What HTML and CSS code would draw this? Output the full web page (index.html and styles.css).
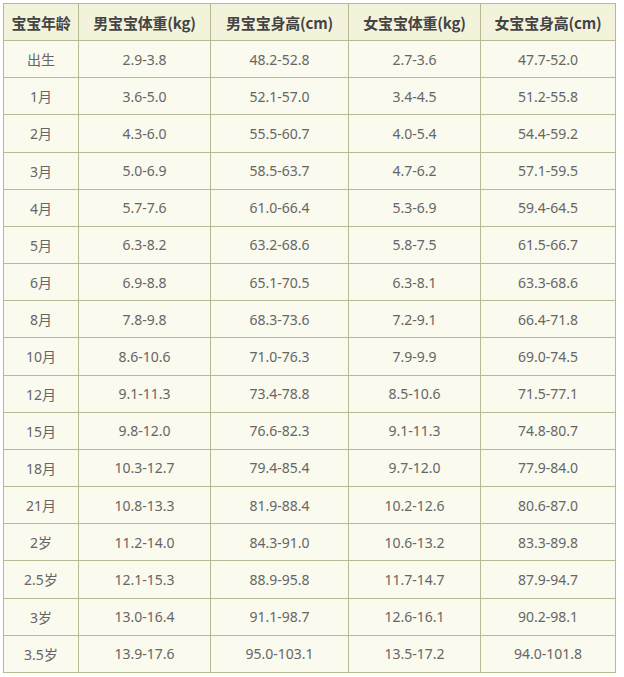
FILE: index.html
```html
<!DOCTYPE html>
<html lang="zh">
<head>
<meta charset="utf-8">
<link rel="stylesheet" href="styles.css">
</head>
<body>
<table class="chart">
<colgroup>
<col class="c1"><col class="c2"><col class="c3"><col class="c4"><col class="c5">
</colgroup>
<thead>
<tr><th>宝宝年龄</th><th>男宝宝体重(kg)</th><th>男宝宝身高(cm)</th><th>女宝宝体重(kg)</th><th>女宝宝身高(cm)</th></tr>
</thead>
<tbody>
<tr><td>出生</td><td>2.9-3.8</td><td>48.2-52.8</td><td>2.7-3.6</td><td>47.7-52.0</td></tr>
<tr><td>1月</td><td>3.6-5.0</td><td>52.1-57.0</td><td>3.4-4.5</td><td>51.2-55.8</td></tr>
<tr><td>2月</td><td>4.3-6.0</td><td>55.5-60.7</td><td>4.0-5.4</td><td>54.4-59.2</td></tr>
<tr><td>3月</td><td>5.0-6.9</td><td>58.5-63.7</td><td>4.7-6.2</td><td>57.1-59.5</td></tr>
<tr><td>4月</td><td>5.7-7.6</td><td>61.0-66.4</td><td>5.3-6.9</td><td>59.4-64.5</td></tr>
<tr><td>5月</td><td>6.3-8.2</td><td>63.2-68.6</td><td>5.8-7.5</td><td>61.5-66.7</td></tr>
<tr><td>6月</td><td>6.9-8.8</td><td>65.1-70.5</td><td>6.3-8.1</td><td>63.3-68.6</td></tr>
<tr><td>8月</td><td>7.8-9.8</td><td>68.3-73.6</td><td>7.2-9.1</td><td>66.4-71.8</td></tr>
<tr><td>10月</td><td>8.6-10.6</td><td>71.0-76.3</td><td>7.9-9.9</td><td>69.0-74.5</td></tr>
<tr><td>12月</td><td>9.1-11.3</td><td>73.4-78.8</td><td>8.5-10.6</td><td>71.5-77.1</td></tr>
<tr><td>15月</td><td>9.8-12.0</td><td>76.6-82.3</td><td>9.1-11.3</td><td>74.8-80.7</td></tr>
<tr><td>18月</td><td>10.3-12.7</td><td>79.4-85.4</td><td>9.7-12.0</td><td>77.9-84.0</td></tr>
<tr><td>21月</td><td>10.8-13.3</td><td>81.9-88.4</td><td>10.2-12.6</td><td>80.6-87.0</td></tr>
<tr><td>2岁</td><td>11.2-14.0</td><td>84.3-91.0</td><td>10.6-13.2</td><td>83.3-89.8</td></tr>
<tr><td>2.5岁</td><td>12.1-15.3</td><td>88.9-95.8</td><td>11.7-14.7</td><td>87.9-94.7</td></tr>
<tr><td>3岁</td><td>13.0-16.4</td><td>91.1-98.7</td><td>12.6-16.1</td><td>90.2-98.1</td></tr>
<tr><td>3.5岁</td><td>13.9-17.6</td><td>95.0-103.1</td><td>13.5-17.2</td><td>94.0-101.8</td></tr>
</tbody>
</table>
</body>
</html>
```
FILE: styles.css
```css
html, body {
  margin: 0;
  padding: 0;
  background: #ffffff;
}
body {
  padding: 3px 0 0 3px;
  font-family: "Noto Sans", "Noto Sans CJK SC", sans-serif;
}
.chart {
  border-collapse: collapse;
  table-layout: fixed;
  width: 612px;
  height: 670px;
  background: #fafaee;
}
.c1 { width: 75px; }
.c2 { width: 132px; }
.c3 { width: 138px; }
.c4 { width: 132px; }
.c5 { width: 135px; }
.chart th, .chart td {
  border: 1px solid #b9b994;
  text-align: center;
  vertical-align: middle;
  padding: 0;
}
.chart th {
  background: #f3f3dc;
  color: #444444;
  font-family: "Noto Sans CJK SC", sans-serif;
  font-weight: bold;
  font-size: 15px;
  letter-spacing: -0.2px;
}
.chart td {
  color: #666666;
  font-size: 14px;
  font-family: "Noto Sans", "Noto Sans CJK SC", sans-serif;
}
.chart tr { height: 37px; }
```
